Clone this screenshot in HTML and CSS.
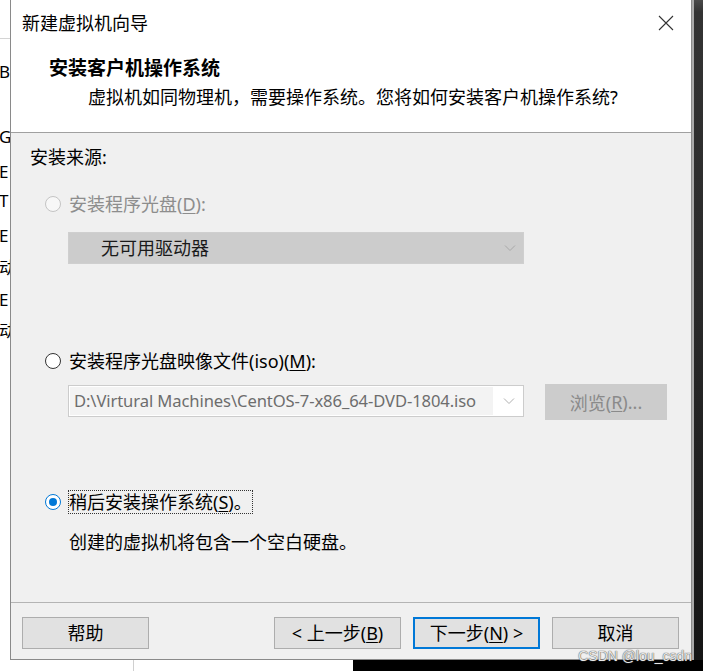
FILE: index.html
```html
<!DOCTYPE html>
<html lang="zh-CN">
<head>
<meta charset="utf-8">
<title>新建虚拟机向导</title>
<link rel="stylesheet" href="styles.css">
</head>
<body>
<div class="screen">
  <div class="bg-left">
    <div class="bg-topline"></div>
    <div class="bl l1">B</div>
    <div class="bl l2">G</div>
    <div class="bl l3">E</div>
    <div class="bl l4">T</div>
    <div class="bl l5">E</div>
    <div class="bl l6">动</div>
    <div class="bl l7">E</div>
    <div class="bl l8">动</div>
  </div>

  <div class="dialog">
    <div class="titlebar">
      <span class="title">新建虚拟机向导</span>
      <svg class="close" width="16" height="16" viewBox="0 0 16 16"><path d="M1 1 L15 15 M15 1 L1 15" stroke="#333" stroke-width="1.1" fill="none"/></svg>
    </div>
    <div class="header">
      <div class="h-title">安装客户机操作系统</div>
      <div class="h-sub">虚拟机如同物理机，需要操作系统。您将如何安装客户机操作系统?</div>
    </div>
    <div class="content">
      <div class="source-label">安装来源:</div>
      <div class="radio-row row1 disabled">
        <span class="radio"></span>
        <span class="label">安装程序光盘(<u>D</u>):</span>
      </div>
      <div class="select disabled-select">
        <span class="select-text">无可用驱动器</span>
        <svg class="chev" width="12" height="8" viewBox="0 0 12 8"><path d="M1 1.5 L6 6.5 L11 1.5" stroke="#a8a8a8" stroke-width="1" fill="none"/></svg>
      </div>
      <div class="radio-row row2">
        <span class="radio"></span>
        <span class="label">安装程序光盘映像文件(iso)(<u>M</u>):</span>
      </div>
      <div class="iso-row">
        <div class="combo">
          <span class="combo-text">D:\Virtural Machines\CentOS-7-x86_64-DVD-1804.iso</span>
          <svg class="chev" width="12" height="8" viewBox="0 0 12 8"><path d="M1 1.5 L6 6.5 L11 1.5" stroke="#b0b0b0" stroke-width="1" fill="none"/></svg>
        </div>
        <div class="browse">浏览(<u>R</u>)...</div>
      </div>
      <div class="radio-row row3">
        <span class="radio checked"></span>
        <span class="label focus">稍后安装操作系统(<u>S</u>)。</span>
      </div>
      <div class="note">创建的虚拟机将包含一个空白硬盘。</div>
    </div>
    <div class="footer">
      <div class="btn">帮助</div>
      <div class="btn-group">
        <div class="btn">&lt; 上一步(<u>B</u>)</div>
        <div class="btn default">下一步(<u>N</u>) &gt;</div>
        <div class="btn">取消</div>
      </div>
    </div>
    <div class="watermark">CSDN @lou_csdn</div>
  </div>

  <div class="bg-right"></div>

  <div class="bg-bottom">
    <div class="bb-white"><div class="bb-line"></div></div>
    <div class="bb-black"></div>
  </div>
</div>
</body>
</html>
```

FILE: styles.css
```css
* { box-sizing: border-box; }
html, body { margin: 0; padding: 0; }
body {
  width: 703px;
  height: 671px;
  overflow: hidden;
  font-family: "Noto Sans", "Noto Sans CJK SC", sans-serif;
  font-size: 18px;
  color: #000;
  background: #fff;
}
u { text-decoration-thickness: 1px; text-underline-offset: 2px; }

.screen {
  display: grid;
  grid-template-columns: 10px 682px 11px;
  grid-template-rows: 660px 11px;
  width: 703px;
  height: 671px;
}

/* left background window */
.bg-left {
  background: #fff;
  overflow: hidden;
  white-space: nowrap;
  font-size: 17px;
}
.bg-topline { height: 1px; background: #d4d4d4; margin-top: 38px; }
.bl { height: 20px; line-height: 20px; margin-left: -1px; }
.l1 { margin-top: 23px; }
.l2 { margin-top: 45px; }
.l3 { margin-top: 15px; }
.l4 { margin-top: 9px; }
.l5 { margin-top: 15px; }
.l6 { margin-top: 12px; }
.l7 { margin-top: 12px; }
.l8 { margin-top: 11px; }

.bg-right {
  background: linear-gradient(to bottom, #4a4a4a 0, #333 12px, #2a2a2a 300px, #151515 660px);
  border-left: 2px solid #a9a9a9;
}

.bg-bottom {
  grid-column: 1 / 4;
  display: flex;
}
.bb-white { width: 353px; background: #fff; }
.bb-line { width: 1px; height: 100%; background: #d0d0d0; margin-left: 133px; }
.bb-black { flex: 1; background: #000; }

/* dialog */
.dialog {
  position: relative;
  border-left: 1px solid #8a8a8a;
  border-right: 1px solid #8a8a8a;
  border-bottom: 1px solid #8a8a8a;
  background: #f0f0f0;
  display: flex;
  flex-direction: column;
}

.titlebar {
  height: 45px;
  background: #fff;
  display: flex;
  align-items: center;
  justify-content: space-between;
  padding: 0 17px 0 11px;
}
.title { font-size: 18px; line-height: 24px; margin-top: 1px; }
.close { display: block; margin-top: 0; }

.header {
  height: 88px;
  background: #fff;
  border-bottom: 1px solid #a0a0a0;
  padding-top: 11px;
}
.h-title {
  font-weight: bold;
  font-size: 19px;
  line-height: 24px;
  padding-left: 38px;
}
.h-sub {
  line-height: 24px;
  margin-top: 5px;
  padding-left: 77px;
}

.content {
  height: 469px;
  padding-top: 12px;
}
.source-label { line-height: 24px; height: 24px; padding-left: 19px; }

.radio-row {
  display: flex;
  align-items: center;
  height: 24px;
  padding-left: 34px;
}
.radio {
  width: 16px;
  height: 16px;
  border-radius: 50%;
  border: 1px solid #333;
  background: #fff;
  flex: none;
  margin-right: 8px;
  position: relative;
}
.radio.checked { border-color: #0078d7; }
.radio.checked::after {
  content: "";
  position: absolute;
  left: 3px; top: 3px;
  width: 8px; height: 8px;
  border-radius: 50%;
  background: #0078d7;
}
.disabled .radio { border-color: #c4c4c4; background: #f7f7f7; }
.disabled .label { color: #8d8d8d; }
.label { line-height: 24px; white-space: nowrap; }
.label.focus {
  outline: 1px dotted #333;
  outline-offset: -1px;
  padding: 0 1px;
  margin-left: -1px;
}

.row1 { margin-top: 23px; }
.row2 { margin-top: 85px; }
.row3 { margin-top: 70px; }

.select {
  margin: 16px 0 0 57px;
  width: 456px;
  height: 32px;
  display: flex;
  align-items: center;
  justify-content: space-between;
  padding: 0 7px 0 32px;
}
.disabled-select { background: #cccccc; border: 1px solid #cfcfcf; }
.select-text { color: #1a1a1a; line-height: 24px; }

.iso-row {
  display: flex;
  align-items: flex-start;
  margin: 11px 0 0 57px;
  height: 36px;
}
.combo {
  margin-top: 1px;
  width: 456px;
  height: 32px;
  background: #fff;
  border: 1px solid #cccccc;
  display: flex;
  align-items: center;
  padding: 1px 8px 1px 1px;
}
.combo-text {
  flex: 1;
  height: 28px;
  line-height: 28px;
  padding-left: 4px;
  background: #f3f3f3;
  color: #6d6d6d;
  font-size: 16.6px;
  letter-spacing: -0.1px;
  white-space: nowrap;
  overflow: hidden;
  margin-right: 10px;
}
.browse {
  margin-left: 21px;
  width: 122px;
  height: 36px;
  background: #cccccc;
  color: #8a8a8a;
  display: flex;
  align-items: center;
  justify-content: center;
}

.note { margin-top: 16px; padding-left: 58px; line-height: 24px; }

.footer {
  height: 57px;
  border-top: 1px solid #b4b4b4;
  padding: 14px 12px 0 11px;
  display: flex;
  align-items: flex-start;
}
.btn-group { margin-left: auto; display: flex; gap: 12px; }
.btn {
  width: 127px;
  height: 32px;
  background: #e1e1e1;
  border: 1px solid #adadad;
  display: flex;
  align-items: center;
  justify-content: center;
  line-height: 24px;
  white-space: nowrap;
}
.btn.default { border: 2px solid #0078d7; }

.watermark {
  position: absolute;
  right: -1px;
  bottom: -5px;
  font-family: "Liberation Sans", Arial, sans-serif;
  font-size: 14px;
  line-height: 16px;
  color: #e8e8e8;
  text-shadow: 0 0 1px #555, 0 0 1px #555;
}
```
